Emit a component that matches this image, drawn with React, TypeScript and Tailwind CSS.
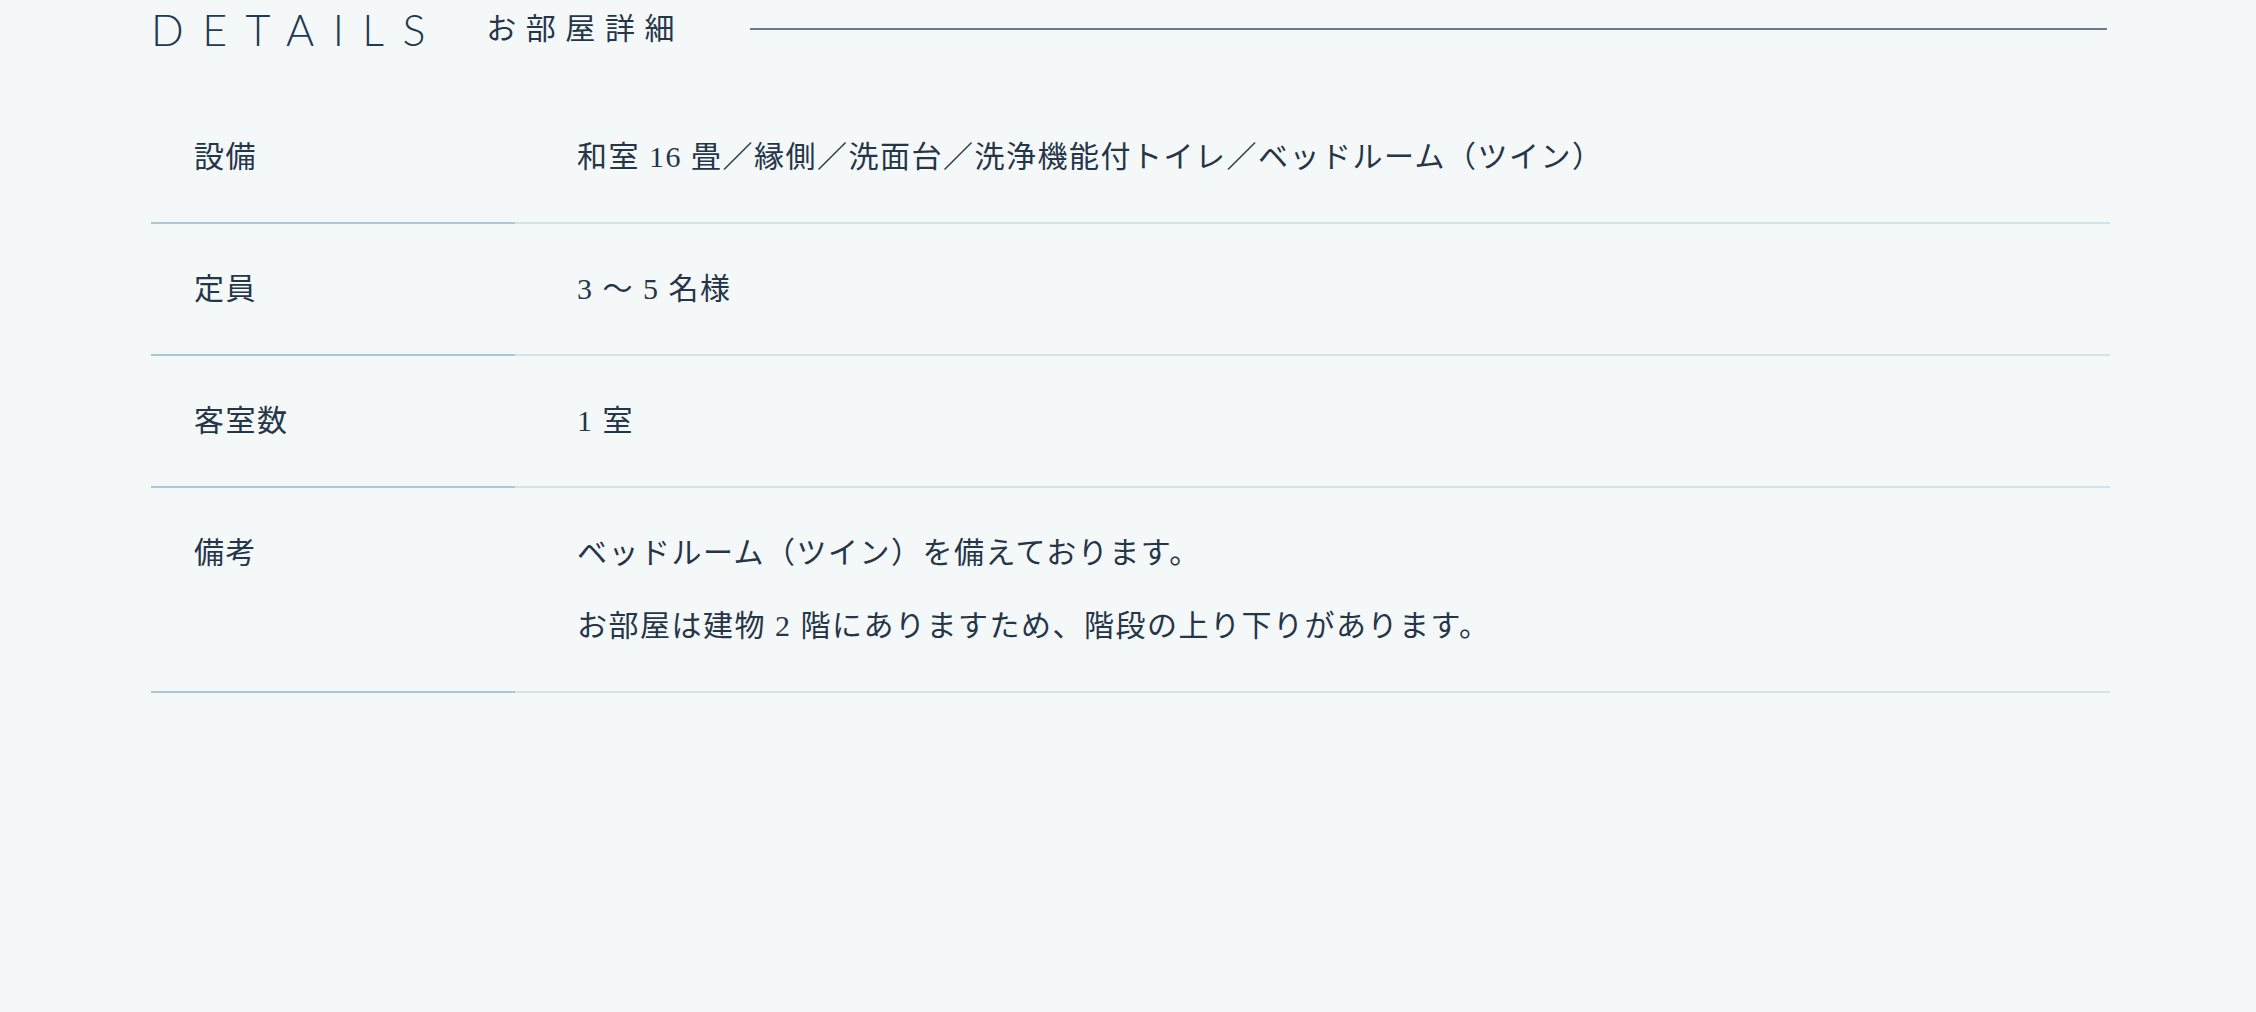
const rows = [
  { label: "設備", values: ["和室 16 畳／縁側／洗面台／洗浄機能付トイレ／ベッドルーム（ツイン）"] },
  { label: "定員", values: ["3 ～ 5 名様"] },
  { label: "客室数", values: ["1 室"] },
  {
    label: "備考",
    values: [
      "ベッドルーム（ツイン）を備えております。",
      "お部屋は建物 2 階にありますため、階段の上り下りがあります。",
    ],
  },
];

const jp = { fontFamily: '"Liberation Serif", "Noto Sans CJK JP", serif' };

export default function App() {
  return (
    <div className="h-[1012px] w-full overflow-hidden bg-[#f5f8f9] text-[#253648]">
      <div className="ml-[151px] w-[1959px]">
        <div className="flex h-[58px] items-center">
          <h2
            className="text-[43px] leading-none font-light tracking-[0.43em] text-[#213a52]"
            style={{ fontFamily: 'Lato, "Open Sans", sans-serif' }}
          >
            DETAILS
          </h2>
          <span className="ml-[42px] text-[30px] leading-none tracking-[0.32em] text-[#253648]" style={jp}>
            お部屋詳細
          </span>
          <div className="ml-[66px] mr-[3px] h-[2px] flex-1 bg-[#687b8c]" />
        </div>

        <div className="mt-[34px] grid grid-cols-[364px_1fr]" style={jp}>
          {rows.map((row) => (
            <div key={row.label} className="contents">
              <div className="border-b-2 border-[#a8c8d3] pl-[43px] py-[41px] text-[30px] leading-[48px] tracking-[0.05em]">
                {row.label}
              </div>
              <div className="flex flex-col gap-[25px] border-b-2 border-[#d3e3ea] pl-[62px] py-[41px] text-[30px] leading-[48px] tracking-[0.05em]">
                {row.values.map((v) => (
                  <p key={v}>{v}</p>
                ))}
              </div>
            </div>
          ))}
        </div>
      </div>
    </div>
  );
}
